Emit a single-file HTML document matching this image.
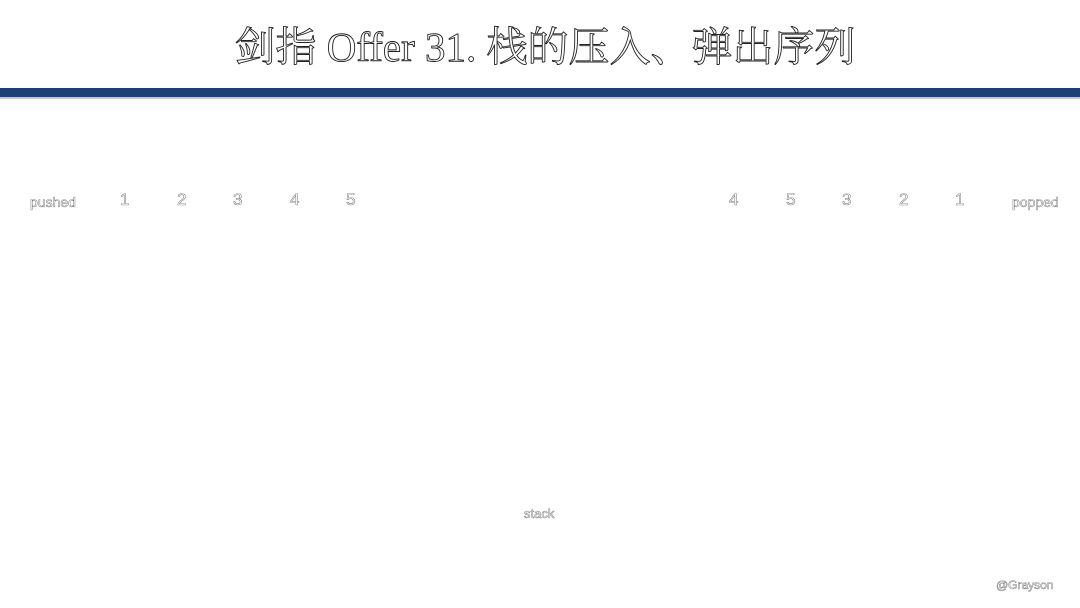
<!DOCTYPE html>
<html><head><meta charset="utf-8"><style>
html,body{margin:0;padding:0;width:1080px;height:608px;background:#fff;overflow:hidden;position:relative}
.o{position:absolute;color:#fff;-webkit-text-stroke:0.35px #444;white-space:nowrap}
.t{font-family:"Liberation Serif","Noto Serif CJK SC",serif;font-size:41px;left:0;width:1090px;text-align:center;top:22px;-webkit-text-stroke:0.9px #222;line-height:50px}
.s{font-family:"Liberation Sans",sans-serif;font-size:14px;line-height:16px}
.n{font-family:"Liberation Sans",sans-serif;font-size:17px;line-height:18px;-webkit-text-stroke:0.35px #333}
.bar{position:absolute;left:0;top:88px;width:1080px;height:9px;background:#1e3f74}
.line{position:absolute;left:0;top:97px;width:1080px;height:2px;background:#c8c8c8}
</style></head><body>
<div class="o t">剑指 Offer 31. 栈的压入、弹出序列</div>
<div class="bar"></div><div class="line"></div>
<div class="o s" style="left:30px;top:194px">pushed</div>
<div class="o n" style="left:120px;top:191px">1</div>
<div class="o n" style="left:177px;top:191px">2</div>
<div class="o n" style="left:233px;top:191px">3</div>
<div class="o n" style="left:290px;top:191px">4</div>
<div class="o n" style="left:346px;top:191px">5</div>
<div class="o n" style="left:729px;top:191px">4</div>
<div class="o n" style="left:786px;top:191px">5</div>
<div class="o n" style="left:842px;top:191px">3</div>
<div class="o n" style="left:899px;top:191px">2</div>
<div class="o n" style="left:955px;top:191px">1</div>
<div class="o s" style="left:1012px;top:194px">popped</div>
<div class="o s" style="left:524px;top:506px;font-size:13px">stack</div>
<div class="o s" style="left:996px;top:577px;font-size:12px">@Grayson</div>
</body></html>
